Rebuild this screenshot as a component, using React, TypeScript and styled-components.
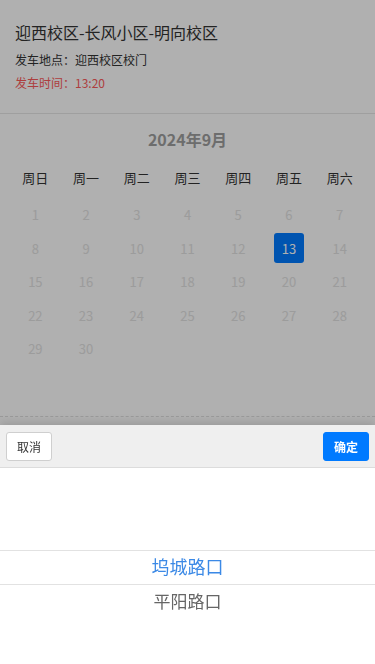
import React from "react";
import styled, { createGlobalStyle } from "styled-components";

const Global = createGlobalStyle`
  html, body { margin: 0; padding: 0; background: #fff; }
  body {
    font-family: "Noto Sans CJK SC", "Noto Sans", sans-serif;
    color: #333;
    width: 375px;
    height: 664px;
    overflow: hidden;
  }
  * { box-sizing: border-box; }
`;

const Page = styled.div`
  width: 375px;
  height: 664px;
  background: #fff;
  display: flex;
  flex-direction: column;
`;

const Header = styled.header`
  padding: 21px 15px 20px;
  border-bottom: 1px solid #e6e6e6;
  display: flex;
  flex-direction: column;
`;

const Title = styled.h1`
  margin: 0;
  font-size: 16px;
  line-height: 22px;
  font-weight: 400;
  color: #333;
`;

const Info = styled.div<{ $warn?: boolean }>`
  font-size: 12px;
  line-height: 20px;
  margin-top: ${(p) => (p.$warn ? "3px" : "7px")};
  color: ${(p) => (p.$warn ? "#fb5a5a" : "#333")};
`;

const Calendar = styled.section`
  padding: 14px 10px 50px;
  border-bottom: 1px dashed #e0e0e0;
`;

const MonthTitle = styled.div`
  text-align: center;
  font-size: 16px;
  line-height: 22px;
  font-weight: 700;
  color: #9e9e9e;
`;

const Week = styled.div`
  display: grid;
  grid-template-columns: repeat(7, 1fr);
  margin-top: 10px;
  height: 34px;
  align-items: center;
`;

const WeekDay = styled.div`
  text-align: center;
  font-size: 13px;
  color: #333;
`;

const Days = styled.div`
  display: grid;
  grid-template-columns: repeat(7, 1fr);
  grid-auto-rows: 33.5px;
  margin-top: 4px;
`;

const DayCell = styled.div`
  display: flex;
  align-items: center;
  justify-content: center;
`;

const DayNum = styled.span<{ $active?: boolean }>`
  width: 30px;
  height: 30px;
  display: flex;
  align-items: center;
  justify-content: center;
  border-radius: 3px;
  font-size: 13px;
  color: ${(p) => (p.$active ? "#fff" : "#e2e2e2")};
  background: ${(p) => (p.$active ? "#007aff" : "transparent")};
`;

const Mask = styled.div`
  position: fixed;
  inset: 0;
  background: rgba(0, 0, 0, 0.31);
`;

const Sheet = styled.div`
  position: fixed;
  left: 0;
  right: 0;
  bottom: 0;
  height: 239px;
  background: #fff;
  box-shadow: 0 -3px 8px rgba(0, 0, 0, 0.12);
  display: flex;
  flex-direction: column;
`;

const Toolbar = styled.div`
  height: 43px;
  background: #efefef;
  border-bottom: 1px solid #dcdcdc;
  padding: 0 6px;
  display: flex;
  align-items: center;
  justify-content: space-between;
`;

const Btn = styled.button<{ $primary?: boolean }>`
  width: 46px;
  height: 29px;
  border-radius: 3px;
  font-family: inherit;
  font-size: 12px;
  padding: 0;
  border: 1px solid ${(p) => (p.$primary ? "#007aff" : "#cfcfcf")};
  background: ${(p) => (p.$primary ? "#007aff" : "#fff")};
  color: ${(p) => (p.$primary ? "#fff" : "#333")};
  font-weight: ${(p) => (p.$primary ? 700 : 400)};
`;

const Picker = styled.div`
  flex: 1;
  display: flex;
  flex-direction: column;
  padding-top: 82px;
`;

const Item = styled.div<{ $selected?: boolean }>`
  height: 35px;
  padding-bottom: 4px;
  display: flex;
  align-items: center;
  justify-content: center;
  font-size: ${(p) => (p.$selected ? "18px" : "17px")};
  color: ${(p) => (p.$selected ? "#3b89e6" : "#666")};
  border-top: ${(p) => (p.$selected ? "1px solid #e2e2e2" : "none")};
  border-bottom: ${(p) => (p.$selected ? "1px solid #e2e2e2" : "none")};
`;

const weekdays = ["周日", "周一", "周二", "周三", "周四", "周五", "周六"];
const days = Array.from({ length: 30 }, (_, i) => i + 1);

export default function App() {
  return (
    <>
      <Global />
      <Page>
        <Header>
          <Title>迎西校区-长风小区-明向校区</Title>
          <Info>发车地点：迎西校区校门</Info>
          <Info $warn>发车时间：13:20</Info>
        </Header>
        <Calendar>
          <MonthTitle>2024年9月</MonthTitle>
          <Week>
            {weekdays.map((w) => (
              <WeekDay key={w}>{w}</WeekDay>
            ))}
          </Week>
          <Days>
            {days.map((d) => (
              <DayCell key={d}>
                <DayNum $active={d === 13}>{d}</DayNum>
              </DayCell>
            ))}
          </Days>
        </Calendar>
      </Page>
      <Mask />
      <Sheet>
        <Toolbar>
          <Btn>取消</Btn>
          <Btn $primary>确定</Btn>
        </Toolbar>
        <Picker>
          <Item $selected>坞城路口</Item>
          <Item>平阳路口</Item>
        </Picker>
      </Sheet>
    </>
  );
}
